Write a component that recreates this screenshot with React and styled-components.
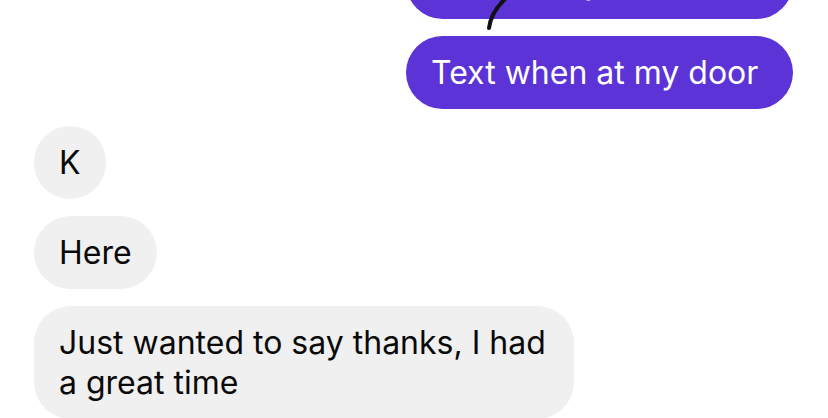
import React from "react";
import styled, { createGlobalStyle } from "styled-components";

const Global = createGlobalStyle`
  html, body {
    margin: 0;
    padding: 0;
    background: #ffffff;
    overflow: hidden;
  }
  body {
    font-family: Inter, "Noto Sans", "Liberation Sans", sans-serif;
    -webkit-font-smoothing: antialiased;
  }
`;

const Thread = styled.div`
  width: 828px;
  height: 418px;
  overflow: hidden;
  box-sizing: border-box;
  padding: 0 35px 0 34px;
`;

const Stack = styled.div`
  display: flex;
  flex-direction: column;
  gap: 17px;
  margin-top: -54px;
`;

const Row = styled.div`
  position: relative;
  display: flex;
  justify-content: ${(p) => (p.$out ? "flex-end" : "flex-start")};
`;

const Bubble = styled.div`
  box-sizing: border-box;
  max-width: ${(p) => (p.$out ? "387px" : "540px")};
  min-width: ${(p) => (p.$out ? "387px" : "0")};
  padding: 16.5px 25px;
  border-radius: 37px;
  font-size: 32px;
  line-height: 40px;
  background: ${(p) => (p.$out ? "#5c33d7" : "#f0f0f0")};
  color: ${(p) => (p.$out ? "#ffffff" : "#0a0a0a")};
`;

const Scribble = styled.svg`
  position: absolute;
  left: 446px;
  top: 50px;
  width: 40px;
  height: 40px;
  overflow: visible;
`;

export default function App() {
  return (
    <>
      <Global />
      <Thread>
        <Stack>
          <Row $out>
            <Bubble $out>On the way</Bubble>
            <Scribble viewBox="0 0 40 40">
              <path
                d="M9 32 C 10 24, 14 13, 27 1"
                fill="none"
                stroke="#111"
                strokeWidth="4"
                strokeLinecap="round"
              />
            </Scribble>
          </Row>
          <Row $out>
            <Bubble $out>Text when at my door</Bubble>
          </Row>
          <Row>
            <Bubble>K</Bubble>
          </Row>
          <Row>
            <Bubble>Here</Bubble>
          </Row>
          <Row>
            <Bubble>Just wanted to say thanks, I had a great time</Bubble>
          </Row>
        </Stack>
      </Thread>
    </>
  );
}
